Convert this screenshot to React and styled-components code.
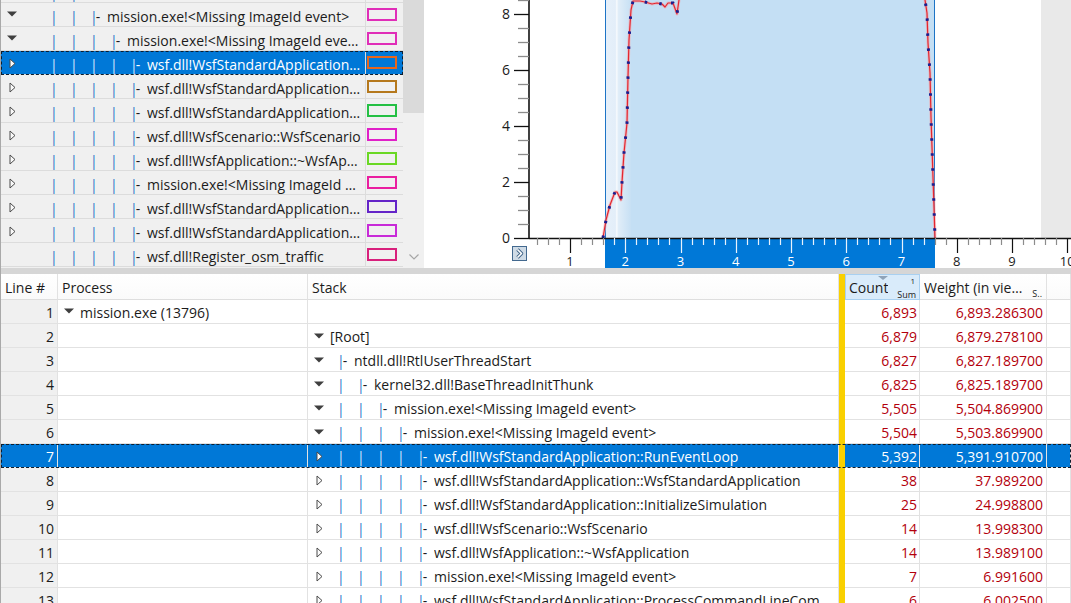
import React from "react";
import styled, { createGlobalStyle, css } from "styled-components";

const FONT = `"Open Sans", "Noto Sans", "Segoe UI", sans-serif`;

const GlobalStyle = createGlobalStyle`
  * { box-sizing: border-box; }
  html, body { margin: 0; padding: 0; background: #fff; overflow: hidden; }
  body { font-family: ${FONT}; font-size: 14px; color: #1b1b1b; }
`;

const Window = styled.div`
  width: 1071px;
  height: 603px;
  overflow: hidden;
  display: grid;
  grid-template-rows: 268px 6px 1fr;
  border-left: 1px solid #a9a9a9;
`;

const TopPane = styled.div`
  display: grid;
  grid-template-columns: 402px 21px 1fr;
  min-height: 0;
  overflow: hidden;
`;

/* ---------- shared tree bits ---------- */

const Pipe = styled.span`
  letter-spacing: -2px;
  color: ${(p) => (p.$light ? "#d6e9ff" : "#2c74c8")};
`;

const Guide = styled.span`
  display: inline-block;
  flex: none;
  width: 20px;
  padding-left: 2px;
`;

const Branch = styled.span`
  display: inline-block;
  flex: none;
  width: 19px;
  padding-left: 2px;
  white-space: pre;
`;

const Name = styled.span`
  flex: 1 1 auto;
  min-width: 0;
  overflow: hidden;
  text-overflow: ellipsis;
  white-space: nowrap;
`;

const Expander = ({ open, leaf }) => {
  if (leaf) return null;
  return open ? (
    <svg width="10" height="6" viewBox="0 0 10 6">
      <path d="M0 0.5 H10 L5 5.5 Z" fill="#3f3f3f" />
    </svg>
  ) : (
    <svg width="7" height="11" viewBox="0 0 7 11">
      <path d="M1 1 L6 5.5 L1 10 Z" fill="#fafafa" stroke="#4a4a4a" strokeWidth="1" />
    </svg>
  );
};

const TreeText = ({ guides, root, name, light }) => (
  <>
    {Array.from({ length: guides }).map((_, i) => (
      <Guide key={i}>
        <Pipe $light={light}>|</Pipe>
      </Guide>
    ))}
    {!root && (
      <Branch>
        <Pipe $light={light}>|</Pipe>-
      </Branch>
    )}
    <Name>{name}</Name>
  </>
);

/* ---------- top-left tree ---------- */

const TreePanel = styled.div`
  background: #f0f0f0;
  overflow: hidden;
  min-height: 0;
`;

const TreeList = styled.div`
  margin-top: -21px;
`;

const TreeRow = styled.div`
  display: grid;
  grid-template-columns: 365px 37px;
  height: 24px;
  border-bottom: 1px solid #dcdcdc;
  ${(p) =>
    p.$selected &&
    css`
      background: #0078d7;
      color: #fff;
      outline: 1px dashed #0d1d2e;
      outline-offset: -1px;
    `}
`;

const TreeCell = styled.div`
  display: flex;
  align-items: center;
  border-right: 1px solid #dcdcdc;
  overflow: hidden;
  white-space: nowrap;
  line-height: 18px;
  padding: 5px 2px 0 0;
`;

const TopExpander = styled.span`
  flex: none;
  width: 47px;
  padding-left: ${(p) => (p.$open ? 6 : 8)}px;
  display: flex;
  align-items: center;
  margin-top: ${(p) => (p.$open ? -6 : -4)}px;
`;

const SwatchCell = styled.div`
  display: flex;
  align-items: center;
  padding-left: 1px;
`;

const Swatch = styled.span`
  width: 30px;
  height: 13px;
  border: 2px solid ${(p) => p.$color};
`;

const Scrollbar = styled.div`
  background: #f0f0f0;
  display: flex;
  flex-direction: column;
  justify-content: space-between;
`;

const Thumb = styled.div`
  height: 113px;
  background: #dadada;
`;

const ScrollArrow = styled.div`
  height: 22px;
  display: flex;
  align-items: center;
  justify-content: center;
`;

const topRows = [
  { g: 1, open: true, name: "kernel32.dll!BaseThreadInitThunk", color: "#e020b0" },
  { g: 2, open: true, name: "mission.exe!<Missing ImageId event>", color: "#e02eb8" },
  { g: 3, open: true, name: "mission.exe!<Missing ImageId event>", color: "#e02eb8" },
  { g: 4, name: "wsf.dll!WsfStandardApplication::RunEventLoop", color: "#e8661c", sel: true },
  { g: 4, name: "wsf.dll!WsfStandardApplication::WsfStandardApplication", color: "#b5781c" },
  { g: 4, name: "wsf.dll!WsfStandardApplication::InitializeSimulation", color: "#24c044" },
  { g: 4, name: "wsf.dll!WsfScenario::WsfScenario", color: "#e020c8" },
  { g: 4, name: "wsf.dll!WsfApplication::~WsfApplication", color: "#6ad824" },
  { g: 4, name: "mission.exe!<Missing ImageId event>", color: "#ea1ea0" },
  { g: 4, name: "wsf.dll!WsfStandardApplication::ProcessCommandLineCommands", color: "#6424c8" },
  { g: 4, name: "wsf.dll!WsfStandardApplication::SetupRun", color: "#c82ad8" },
  { g: 4, leaf: true, name: "wsf.dll!Register_osm_traffic", color: "#d8207c" },
];

/* ---------- chart ---------- */

const ChartPanel = styled.div`
  position: relative;
  background: #fff;
  overflow: hidden;
`;

const ChartToggle = styled.button`
  position: absolute;
  left: 88px;
  top: 246px;
  width: 15px;
  height: 15px;
  padding: 0;
  border: 1px solid #43698f;
  background: #cfdbe6;
  display: grid;
  place-items: center;
  cursor: pointer;
`;

const AXX = 105;
const AXY = 238;
const SEL_L = 181;
const SEL_R = 511;
const xv = (v) => 146 + (v - 1) * 55.25;
const yv = (v) => AXY - v * 28;

const curve = [
  [179, 238], [182, 220], [186, 205], [191, 192], [193, 192], [197, 200], [198, 182],
  [200, 153], [203, 123], [204, 77], [205, 40], [207, 10], [209, 1], [216, 1], [221, 2],
  [228, 4], [233, 3], [238, 4], [241, 7], [244, 3], [249, 3], [253, 14], [255, 0],
  [258, -30], [496, -30], [501, 0], [503, 13], [504, 43], [506, 73], [507, 117],
  [508, 147], [509, 177], [510, 207], [511, 238],
]
  .map(([x, y]) => `${x},${y}`)
  .join(" ");

const Chart = () => {
  const yTicks = [];
  for (let i = 0; i <= 17; i++) {
    const v = i / 2;
    const major = i % 4 === 0;
    const y = yv(v) + 0.5;
    yTicks.push(
      <line key={`y${i}`} x1={major ? 90 : 94} x2={AXX} y1={y} y2={y}
        stroke={major ? "#111" : "#8c8c8c"} strokeWidth="1.3" />
    );
  }
  const xTicks = [];
  for (let i = 2; i <= 51; i++) {
    const v = i / 5;
    const x = Math.round(xv(v)) + 0.5;
    const major = i % 5 === 0;
    const inSel = x > SEL_L && x < SEL_R;
    xTicks.push(
      <line key={`x${i}`} x1={x} x2={x} y1={AXY} y2={AXY + (major ? 15 : 7)}
        stroke={inSel ? "#e8f2fc" : major ? "#111" : "#8c8c8c"} strokeWidth="1.2" />
    );
  }
  return (
    <svg width="647" height="268" viewBox="0 0 647 268" style={{ display: "block" }}>
      <defs>
        <linearGradient id="selEdge" x1="0" x2="1" y1="0" y2="0">
          <stop offset="0" stopColor="#e6f0fa" />
          <stop offset="0.4" stopColor="#e3eef9" />
          <stop offset="0.45" stopColor="#f7fafd" />
          <stop offset="0.52" stopColor="#e0edf8" />
          <stop offset="1" stopColor="#c7e0f4" />
        </linearGradient>
      </defs>
      <rect x="617" y="0" width="30" height={AXY} fill="#e9e9e9" />
      <rect x={SEL_L} y="0" width="26" height={AXY} fill="url(#selEdge)" />
      <rect x={SEL_L + 26} y="0" width={SEL_R - SEL_L - 26} height={AXY} fill="#c4dff4" />
      <rect x={SEL_L} y={AXY} width={SEL_R - SEL_L} height={30} fill="#0078d7" />
      <line x1={SEL_L + 0.5} x2={SEL_L + 0.5} y1="0" y2={AXY} stroke="#1d74c6" />
      <line x1={SEL_R - 0.5} x2={SEL_R - 0.5} y1="0" y2={AXY} stroke="#1d74c6" />
      <polyline points={curve} fill="none" stroke="#f4a3a8" strokeWidth="3" strokeLinejoin="round" opacity="0.6" />
      <polyline points={curve} fill="none" stroke="#e3262f" strokeWidth="1.2" strokeLinejoin="round" />
      <polyline points={curve} fill="none" stroke="#1b1f8f" strokeWidth="3" strokeDasharray="2.5 12.5" />
      <line x1={AXX} x2={AXX} y1="0" y2={AXY} stroke="#111" strokeWidth="1.6" />
      <line x1={AXX} x2="647" y1={AXY + 0.5} y2={AXY + 0.5} stroke="#111" strokeWidth="1.6" />
      {yTicks}
      {xTicks}
      <g fontFamily={FONT} fontSize="14" fill="#1a1a1a" textAnchor="end">
        {[0, 2, 4, 6, 8].map((v) => (
          <text key={v} x="86" y={yv(v) + 5}>{v}</text>
        ))}
      </g>
      <g fontFamily={FONT} fontSize="13" textAnchor="middle">
        {[1, 2, 3, 4, 5, 6, 7, 8, 9, 10].map((v) => {
          const x = xv(v);
          const inSel = x > SEL_L && x < SEL_R;
          return (
            <text key={v} x={x} y="266" fill={inSel ? "#fff" : "#1a1a1a"}>{v}</text>
          );
        })}
      </g>
    </svg>
  );
};

/* ---------- bottom table ---------- */

const COLS = "57px 250px 531px 6px 75px 127px 1fr";

const Splitter = styled.div`
  background: #d6d6d6;
`;

const Table = styled.div`
  overflow: hidden;
  min-height: 0;
`;

const HeaderRow = styled.div`
  display: grid;
  grid-template-columns: ${COLS};
  height: 26px;
  background: linear-gradient(#ffffff, #fafafa);
`;

const HeadCell = styled.div`
  position: relative;
  display: flex;
  align-items: center;
  padding-left: ${(p) => p.$pad ?? 4}px;
  padding-top: 1px;
  border-right: 1px solid #e2e2e2;
  border-bottom: 1px solid #dedede;
  white-space: nowrap;
  overflow: hidden;
  ${(p) =>
    p.$sorted &&
    css`
      background: #d9ebfa;
      border: 1px solid #a9d0f0;
    `}
`;

const HeadTitle = styled.span`
  overflow: hidden;
  text-overflow: ellipsis;
  max-width: ${(p) => p.$max || 400}px;
`;

const SortArrow = styled.span`
  position: absolute;
  top: 1px;
  left: 32px;
  width: 0;
  height: 0;
  border-left: 5px solid transparent;
  border-right: 5px solid transparent;
  border-top: 4px solid #8fa3b8;
`;

const Tiny = styled.span`
  position: absolute;
  font-size: ${(p) => p.$size || 9}px;
  line-height: 1;
  color: #222;
  right: ${(p) => p.$right}px;
  top: ${(p) => p.$top}px;
`;

const Yellow = styled.div`
  background: #f9d000;
`;

const Row = styled.div`
  display: grid;
  grid-template-columns: ${COLS};
  height: 24px;
  ${(p) =>
    p.$selected &&
    css`
      background: #0078d7;
      color: #fff;
      outline: 1px dashed #0d1d2e;
      outline-offset: -1px;
    `}
`;

const Cell = styled.div`
  display: flex;
  align-items: center;
  border-right: 1px solid #e2e2e2;
  border-bottom: 1px solid #e2e2e2;
  line-height: 20px;
  padding-top: 2px;
  white-space: nowrap;
  overflow: hidden;
  min-width: 0;
  padding-right: ${(p) => p.$padR ?? 0}px;
  justify-content: ${(p) => (p.$right ? "flex-end" : "flex-start")};
  color: ${(p) => (p.$num ? (p.$sel ? "#fff" : "#b3000c") : "inherit")};
  ${(p) =>
    p.$gutter &&
    css`
      background: ${p.$sel ? "#0078d7" : "#f0f0f0"};
    `}
`;

const ProcExpander = styled.span`
  flex: none;
  width: 22px;
  padding-left: 6px;
  display: flex;
  align-items: center;
  margin-top: -3px;
`;

const StackExpander = styled.span`
  flex: none;
  width: 20px;
  padding-left: ${(p) => (p.$open ? 6 : 8)}px;
  display: flex;
  align-items: center;
  margin-top: ${(p) => (p.$open ? -2 : -1)}px;
`;

const StackBody = styled.span`
  display: flex;
  align-items: center;
  min-width: 0;
  flex: 1;
  padding-left: ${(p) => (p.$root ? 2 : 7)}px;
`;

const tableRows = [
  { n: 1, proc: "mission.exe (13796)", count: "6,893", weight: "6,893.286300" },
  { n: 2, root: true, open: true, name: "[Root]", count: "6,879", weight: "6,879.278100" },
  { n: 3, g: 0, open: true, name: "ntdll.dll!RtlUserThreadStart", count: "6,827", weight: "6,827.189700" },
  { n: 4, g: 1, open: true, name: "kernel32.dll!BaseThreadInitThunk", count: "6,825", weight: "6,825.189700" },
  { n: 5, g: 2, open: true, name: "mission.exe!<Missing ImageId event>", count: "5,505", weight: "5,504.869900" },
  { n: 6, g: 3, open: true, name: "mission.exe!<Missing ImageId event>", count: "5,504", weight: "5,503.869900" },
  { n: 7, g: 4, name: "wsf.dll!WsfStandardApplication::RunEventLoop", count: "5,392", weight: "5,391.910700", sel: true },
  { n: 8, g: 4, name: "wsf.dll!WsfStandardApplication::WsfStandardApplication", count: "38", weight: "37.989200" },
  { n: 9, g: 4, name: "wsf.dll!WsfStandardApplication::InitializeSimulation", count: "25", weight: "24.998800" },
  { n: 10, g: 4, name: "wsf.dll!WsfScenario::WsfScenario", count: "14", weight: "13.998300" },
  { n: 11, g: 4, name: "wsf.dll!WsfApplication::~WsfApplication", count: "14", weight: "13.989100" },
  { n: 12, g: 4, name: "mission.exe!<Missing ImageId event>", count: "7", weight: "6.991600" },
  { n: 13, g: 4, name: "wsf.dll!WsfStandardApplication::ProcessCommandLineCommands", count: "6", weight: "6.002500" },
];

export default function App() {
  return (
    <>
      <GlobalStyle />
      <Window>
        <TopPane>
          <TreePanel>
            <TreeList>
              {topRows.map((r, i) => (
                <TreeRow key={i} $selected={r.sel}>
                  <TreeCell>
                    <TopExpander $open={r.open}>
                      <Expander open={r.open} leaf={r.leaf} />
                    </TopExpander>
                    <TreeText guides={r.g} name={r.name} light={r.sel} />
                  </TreeCell>
                  <SwatchCell>
                    <Swatch $color={r.color} />
                  </SwatchCell>
                </TreeRow>
              ))}
            </TreeList>
          </TreePanel>
          <Scrollbar>
            <Thumb />
            <ScrollArrow>
              <svg width="10" height="6" viewBox="0 0 10 6">
                <path d="M0.5 0.5 L5 5 L9.5 0.5" fill="none" stroke="#a6a6a6" strokeWidth="1.2" />
              </svg>
            </ScrollArrow>
          </Scrollbar>
          <ChartPanel>
            <Chart />
            <ChartToggle aria-label="expand">
              <svg width="11" height="11" viewBox="0 0 11 11">
                <path d="M3.5 1.5 L7.5 5.5 L3.5 9.5" fill="none" stroke="#3f6386" strokeWidth="3.4" strokeLinejoin="round" />
                <path d="M3.5 1.5 L7.5 5.5 L3.5 9.5" fill="none" stroke="#ffffff" strokeWidth="1.6" strokeLinejoin="round" />
              </svg>
            </ChartToggle>
          </ChartPanel>
        </TopPane>
        <Splitter />
        <Table>
          <HeaderRow>
            <HeadCell>Line #</HeadCell>
            <HeadCell>Process</HeadCell>
            <HeadCell>Stack</HeadCell>
            <Yellow />
            <HeadCell $sorted $pad={3}>
              <HeadTitle>Count</HeadTitle>
              <SortArrow />
              <Tiny $size={8} $right={4} $top={2}>1</Tiny>
              <Tiny $right={3} $top={15}>Sum</Tiny>
            </HeadCell>
            <HeadCell>
              <HeadTitle $max={103}>Weight (in view) (ms)</HeadTitle>
              <Tiny $right={4} $top={15}>S..</Tiny>
            </HeadCell>
            <HeadCell />
          </HeaderRow>
          {tableRows.map((r) => (
            <Row key={r.n} $selected={r.sel}>
              <Cell $gutter $sel={r.sel} $right $padR={3}>{r.n}</Cell>
              <Cell>
                {r.proc && (
                  <>
                    <ProcExpander>
                      <Expander open />
                    </ProcExpander>
                    {r.proc}
                  </>
                )}
              </Cell>
              <Cell $padR={6}>
                {r.name && (
                  <>
                    <StackExpander $open={r.open}>
                      <Expander open={r.open} />
                    </StackExpander>
                    <StackBody $root={r.root}>
                      <TreeText guides={r.g || 0} root={r.root} name={r.name} light={r.sel} />
                    </StackBody>
                  </>
                )}
              </Cell>
              <Yellow />
              <Cell $num $sel={r.sel} $right $padR={2}>{r.count}</Cell>
              <Cell $num $sel={r.sel} $right $padR={3}>{r.weight}</Cell>
              <Cell />
            </Row>
          ))}
        </Table>
      </Window>
    </>
  );
}
